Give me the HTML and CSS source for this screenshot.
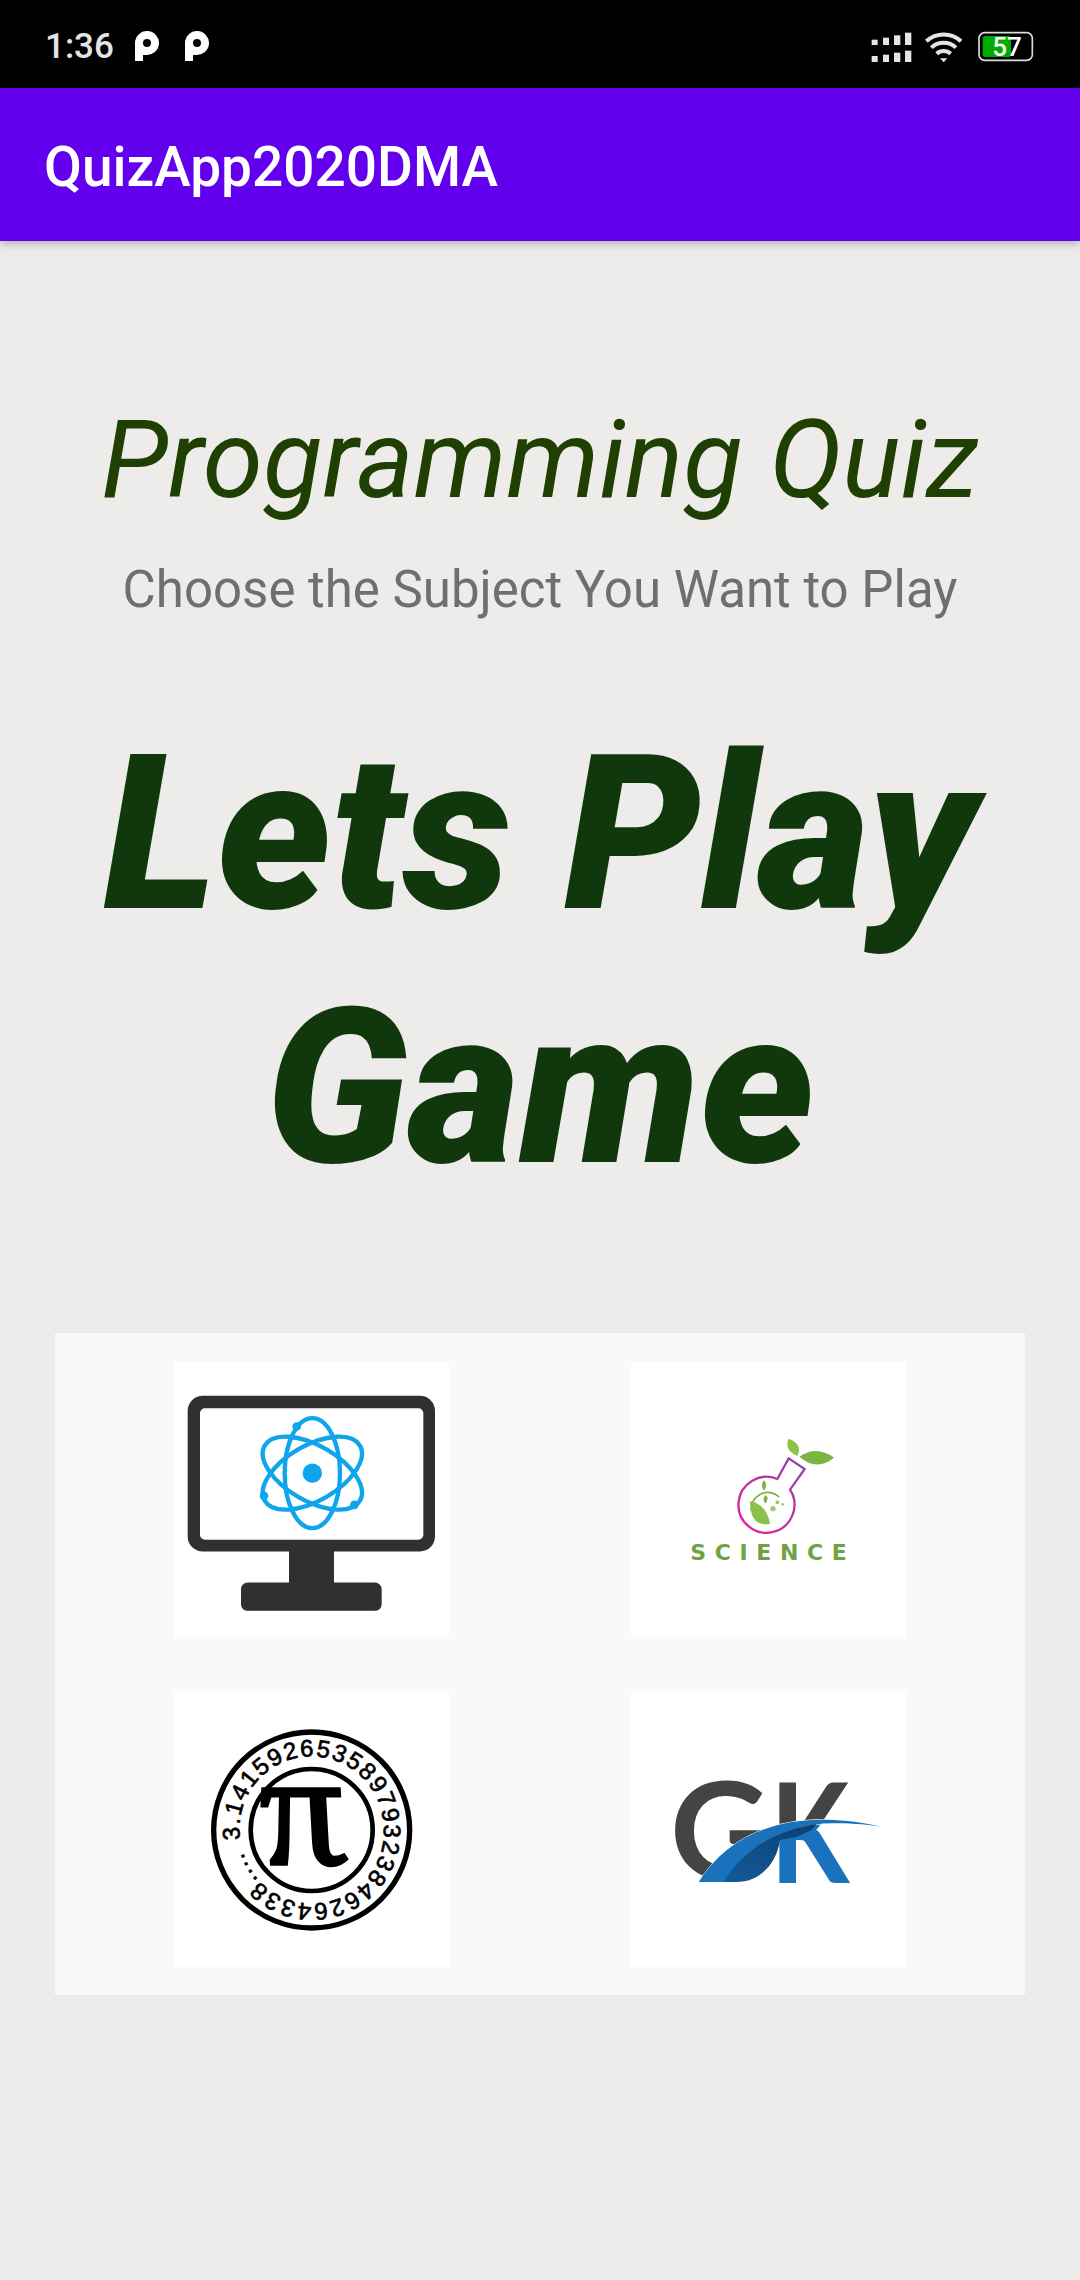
FILE: index.html
```html
<!DOCTYPE html>
<html lang="en">
<head>
<meta charset="utf-8">
<title>QuizApp2020DMA</title>
<link rel="stylesheet" href="styles.css">
</head>
<body>
<header class="status">
  <div class="status-left">
    <span class="time">1:36</span>
    <svg class="p-icon" viewBox="0 0 24 30"><path d="M0 30V12A12 12 0 1 1 11 24H8V30Z M8 12A4 4 0 1 0 12 8A4 4 0 0 0 8 12Z" fill="#fff" fill-rule="evenodd"/></svg>
    <svg class="p-icon" viewBox="0 0 24 30"><path d="M0 30V12A12 12 0 1 1 11 24H8V30Z M8 12A4 4 0 1 0 12 8A4 4 0 0 0 8 12Z" fill="#fff" fill-rule="evenodd"/></svg>
  </div>
  <svg class="status-right" viewBox="0 0 720 264">
    <g fill="#e4e4e4">
      <rect x="95" y="119" width="18" height="16"/><rect x="95" y="168" width="18" height="18"/>
      <rect x="129" y="113" width="18" height="22"/><rect x="129" y="164" width="18" height="22"/>
      <rect x="162" y="106" width="19" height="29"/><rect x="162" y="158" width="19" height="28"/>
      <rect x="195" y="98" width="19" height="37"/><rect x="195" y="152" width="19" height="34"/>
    </g>
    <g fill="none" stroke="#e4e4e4" stroke-width="12">
      <path d="M259 124A76 76 0 0 1 363 124"/>
      <path d="M274 143A54 54 0 0 1 348 143"/>
      <path d="M290 161A31 31 0 0 1 332 161"/>
    </g>
    <path d="M300 175H322L311 187Z" fill="#e4e4e4"/>
    <rect x="417" y="98" width="160" height="83" rx="17" fill="none" stroke="#dcdcdc" stroke-width="5"/>
    <rect x="428" y="108" width="85" height="63" rx="8" fill="#00aa00"/>
    <text class="batt" x="501" y="167">57</text>
  </svg>
</header>
<div class="appbar">QuizApp2020DMA</div>
<main class="content">
  <h1 class="title">Programming Quiz</h1>
  <p class="subtitle">Choose the Subject You Want to Play</p>
  <h2 class="hero">Lets Play Game</h2>
  <section class="panel">
    <div class="tile">
      <svg viewBox="42 66 825 820">
        <path d="M130 165H780A45 45 0 0 1 825 210V587A45 45 0 0 1 780 632H522V725H645A20 20 0 0 1 665 745V790A20 20 0 0 1 645 810H263A20 20 0 0 1 243 790V745A20 20 0 0 1 263 725H387V632H130A45 45 0 0 1 83 587V210A45 45 0 0 1 130 165Z M135 202A15 15 0 0 0 120 217V582A15 15 0 0 0 135 597H775A15 15 0 0 0 790 582V217A15 15 0 0 0 775 202Z" fill="#303030" fill-rule="evenodd"/>
        <g fill="none" stroke="#0ea5ec" stroke-width="13">
          <ellipse cx="457" cy="397" rx="83" ry="165"/>
          <ellipse cx="457" cy="397" rx="83" ry="165" transform="rotate(60 457 397)"/>
          <ellipse cx="457" cy="397" rx="83" ry="165" transform="rotate(-60 457 397)"/>
        </g>
        <g fill="#0ea5ec">
          <circle cx="457" cy="397" r="29"/>
          <circle cx="410" cy="257" r="13"/>
          <circle cx="312" cy="465" r="13"/>
          <circle cx="583" cy="492" r="13"/>
        </g>
      </svg>
    </div>
    <div class="tile">
      <svg viewBox="33 63 825 825">
        <defs>
          <linearGradient id="flask" x1="0" y1="1" x2="1" y2="0">
            <stop offset="0" stop-color="#e8209a"/><stop offset="1" stop-color="#8a4aa8"/>
          </linearGradient>
        </defs>
        <path d="M472 414A84 84 0 1 0 510 446L554 384L506 352Z" fill="none" stroke="url(#flask)" stroke-width="7"/>
        <path d="M538 347Q590 312 642 350Q590 392 538 347Z" fill="#7cb342"/>
        <path d="M532 345Q490 325 506 293Q550 310 532 345Z" fill="#8bc34a"/>
        <path d="M394 510A50 50 0 0 1 478 468" fill="none" stroke="#7cb342" stroke-width="5"/>
        <path d="M390 480Q440 490 450 548Q390 560 390 480Z" fill="#8bc34a"/>
        <path d="M432 418Q445 430 432 450Q420 432 432 418ZM436 462Q450 470 436 488Q425 475 436 462Z" fill="#7cb342"/>
        <g fill="#9ccc65"><circle cx="459" cy="503" r="8"/><circle cx="472" cy="484" r="6"/><circle cx="488" cy="490" r="4"/></g>
        <text class="sci" x="211" y="657" textLength="469">SCIENCE</text>
      </svg>
    </div>
    <div class="tile">
      <svg viewBox="42 36 825 825">
        <circle cx="455" cy="450" r="294" fill="none" stroke="#000" stroke-width="16"/>
        <circle cx="455" cy="450" r="183" fill="none" stroke="#000" stroke-width="14"/>
        <defs><path id="ring" d="M241 479A216 216 0 1 1 669 421A216 216 0 1 1 241 479"/></defs>
        <text class="digits"><textPath href="#ring" textLength="1335">3.14159265358979323846264338....</textPath></text>
        <text class="pi" x="0" y="0" transform="translate(455 552) skewX(13)">π</text>
      </svg>
    </div>
    <div class="tile">
      <svg viewBox="33 36 825 825">
        <defs>
          <linearGradient id="kfill" gradientUnits="userSpaceOnUse" x1="0" y1="312" x2="0" y2="606">
            <stop offset="0.4" stop-color="#444"/><stop offset="0.4" stop-color="#1a72bd"/>
          </linearGradient>
          <linearGradient id="lens" x1="0" y1="1" x2="1" y2="0">
            <stop offset="0" stop-color="#135a9a"/><stop offset="1" stop-color="#0d3f70"/>
          </linearGradient>
        </defs>
        <text class="gk" x="150" y="600">G</text>
        <text class="gk k-letter" x="454" y="606" textLength="229" lengthAdjust="spacingAndGlyphs">K</text>
        <path d="M236 606C320 470 470 410 640 420C700 423 750 432 786 440C730 432 680 430 640 430C500 430 390 500 320 606Z" fill="#1a72bd" stroke="#fff" stroke-width="3" paint-order="stroke"/>
        <path d="M312 606C360 520 460 450 590 432L575 450L530 470L480 480C470 550 420 606 350 606Z" fill="url(#lens)"/>
      </svg>
    </div>
  </section>
</main>
</body>
</html>
```
FILE: styles.css
```css
* { box-sizing: border-box; }
html, body { margin: 0; padding: 0; }
body {
  width: 1080px;
  height: 2280px;
  background: #edecea;
  font-family: Roboto, sans-serif;
  overflow: hidden;
}
.status {
  height: 88px;
  background: #000;
  display: flex;
  justify-content: space-between;
}
.status-left {
  display: flex;
  align-items: center;
  padding-left: 45px;
}
.time {
  color: #e4e4e4;
  font-size: 35px;
  font-weight: 500;
  width: 90px;
  margin-top: 5px;
}
.p-icon {
  width: 24px;
  height: 30px;
  margin-right: 26px;
  margin-top: 4px;
}
.status-right { width: 240px; height: 88px; }
.batt { font-family: Roboto, sans-serif; font-weight: 500; font-size: 78px; fill: #fff; text-anchor: middle; }
.appbar {
  height: 153px;
  background: #6200ee;
  color: #fff;
  font-size: 55px;
  font-weight: 500;
  line-height: 159px;
  padding-left: 44px;
  box-shadow: 0 3px 8px rgba(0,0,0,0.25);
  position: relative;
}
.content {
  display: flex;
  flex-direction: column;
  align-items: center;
  padding-top: 152px;
}
.title {
  margin: 0;
  font-size: 109px;
  font-weight: 400;
  font-style: italic;
  color: #204003;
  line-height: 134px;
}
.subtitle {
  margin: 32px 0 0;
  font-size: 51px;
  color: #6f6f6f;
  line-height: 61px;
}
.hero {
  margin: 88px 0 0;
  width: 960px;
  font-size: 216px;
  font-weight: 900;
  font-style: italic;
  color: #10380c;
  line-height: 254px;
  text-align: center;
}
.panel {
  width: 970px;
  height: 662px;
  margin-top: 117px;
  background: #faf9f7;
  display: grid;
  grid-template-columns: 275px 275px;
  column-gap: 182px;
  row-gap: 55px;
  padding: 29px 0 0 119px;
  align-content: start;
}
.tile { width: 275px; height: 275px; background: #fff; }
.tile svg { display: block; width: 100%; height: 100%; }
.sci { font-family: "DejaVu Sans", sans-serif; font-size: 66px; font-weight: 700; fill: #6fa243; }
.digits { font-family: "Liberation Sans", sans-serif; font-size: 72px; fill: #000; stroke: #000; stroke-width: 2; }
.pi { font-family: "Liberation Serif", serif; font-size: 490px; font-style: italic; fill: #000; stroke: #000; stroke-width: 10; text-anchor: middle; }
.gk { font-family: Lato, sans-serif; font-size: 410px; font-weight: 700; fill: #444; }
.k-letter { fill: url(#kfill); stroke: url(#kfill); stroke-width: 6; }
```
